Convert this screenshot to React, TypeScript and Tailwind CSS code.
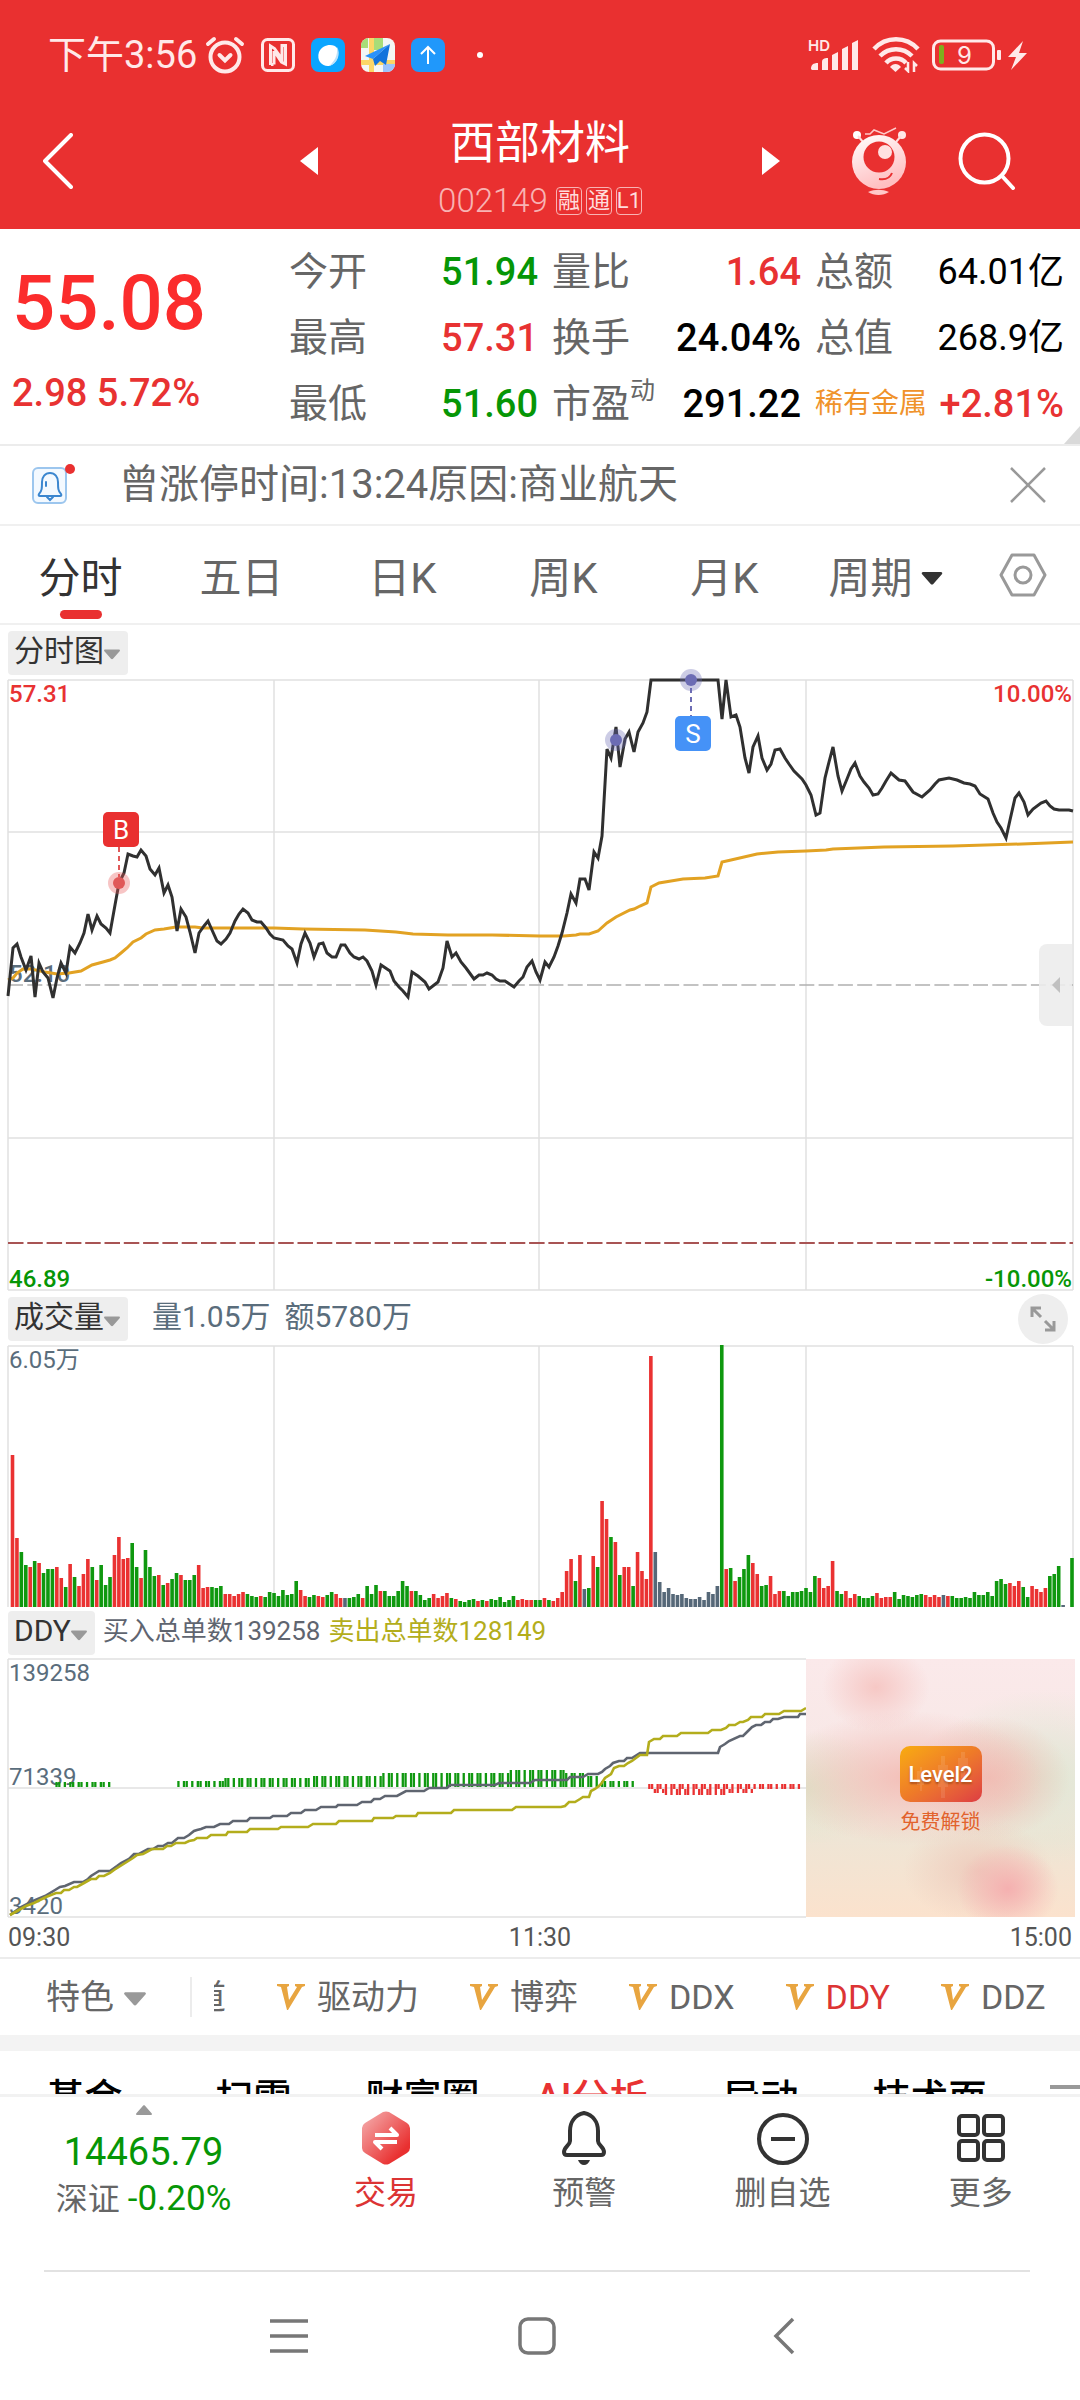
import type { ReactNode } from "react";

const PRICE =
  "8,316 13,268 17,264 21,277 26,290 31,276 35,317 39,283 43,292 48,298 53,318 57,298 61,283 66,293 70,267 75,273 80,263 84,253 88,234 92,250 97,236 101,244 106,248 110,253 115,225 119,203 124,193 128,174 133,176 137,177 141,170 146,176 150,189 155,195 159,188 164,213 168,205 172,217 177,251 181,229 186,237 190,252 195,273 199,253 204,246 208,241 212,250 217,261 221,264 226,259 230,253 235,241 239,234 243,229 248,233 252,240 257,242 261,242 266,248 270,254 274,258 283,260 288,266 292,269 297,283 301,264 305,253 310,263 314,277 319,264 323,263 327,273 332,277 336,277 341,265 345,265 350,273 354,277 359,279 363,277 367,281 372,291 376,305 381,285 390,291 394,301 399,307 403,311 408,317 412,292 418,296 425,302 429,309 438,302 443,288 447,261 452,277 456,273 461,282 466,288 474,299 479,295 483,295 487,293 492,295 496,299 500,301 505,301 514,307 519,301 523,297 527,287 532,281 536,292 540,300 545,282 549,287 554,277 558,266 562,253 567,233 571,214 576,223 580,199 585,199 589,210 594,172 598,178 602,156 607,69 611,78 616,47 620,87 625,59 629,52 634,72 638,52 643,43 647,32 651,0 718,0 722,39 726,0 731,37 736,35 740,47 745,78 749,93 753,67 758,56 762,78 767,90 771,84 775,70 780,69 785,78 789,84 794,91 802,99 806,105 811,115 816,135 820,133 825,98 829,82 833,67 838,96 842,111 847,99 851,89 855,83 860,96 864,102 869,108 873,115 878,114 882,108 886,101 891,93 899,100 905,101 913,112 922,117 930,110 935,104 939,100 949,98 957,100 964,103 970,104 975,106 980,114 988,119 993,133 997,142 1001,148 1006,158 1010,140 1015,118 1019,113 1024,122 1028,135 1033,129 1041,123 1046,121 1050,126 1054,129 1059,130 1069,130 1073,131";

const AVERAGE =
  "8,300 13,298 17,293 23,289 31,289 45,292 57,294 69,293 81,291 92,285 103,282 110,280 115,278 121,273 127,268 133,262 141,258 146,254 155,250 164,249 176,247 195,247 203,248 234,248 274,248 303,249 365,250 396,252 413,254 448,255 492,255 540,256 564,256 576,255 580,254 589,254 598,251 607,243 616,237 630,230 634,229 640,226 647,223 651,207 659,203 671,201 683,199 705,198 718,196 722,182 731,180 757,174 778,172 806,171 826,170 833,169 884,167 953,166 1022,164 1073,162";

const BUY_ORDERS =
  "10,256 21,248 33,242 45,237 55,231 60,228 65,227 74,223 83,223 88,220 91,217 99,212 110,212 117,207 121,204 129,200 134,195 139,195 148,190 153,190 158,187 163,187 168,184 172,184 178,179 184,179 189,176 194,172 197,171 201,170 206,168 214,168 220,165 229,165 233,162 247,162 250,159 270,159 273,157 287,157 291,154 301,154 305,151 316,151 321,148 336,148 338,146 357,146 362,143 371,143 374,140 380,140 385,137 397,137 406,132 424,132 429,129 447,129 450,126 495,126 499,124 530,124 535,121 567,121 570,118 583,118 588,115 598,115 602,113 605,110 610,107 613,104 619,102 624,102 627,99 632,99 640,94 718,94 720,88 725,85 729,82 740,77 743,77 748,72 752,68 756,66 761,66 765,63 770,63 773,60 778,60 784,58 798,58 800,55 806,55";

const SELL_ORDERS =
  "10,256 26,247 34,244 46,238 56,234 61,234 64,231 69,231 74,228 77,228 84,224 91,220 96,220 99,217 104,217 110,214 114,211 133,199 137,196 143,195 152,190 163,190 167,187 171,187 176,184 185,184 189,182 194,181 197,179 207,179 211,176 226,176 228,173 247,173 250,170 278,170 281,168 308,168 313,165 336,165 339,162 372,162 374,159 393,159 396,157 416,157 418,154 451,154 454,151 512,151 516,148 561,148 565,147 569,143 575,143 580,140 583,138 589,138 591,132 595,130 599,127 601,125 605,119 611,115 614,109 619,107 624,107 628,104 632,102 640,96 647,96 649,83 654,80 660,80 663,77 677,77 681,74 708,74 712,71 721,71 726,69 729,66 735,66 740,63 743,63 748,61 751,58 762,58 765,55 779,55 784,52 801,52 806,49";

// one bar per minute: r = up, g = down, s = flat
const VOLUME = (
  "r152 r69 g55 g42 r40 g46 r44 g34 g38 g38 r40 r29 g20 r43 g30 r21 r33 r48 g40 r27 g42 g22 g30 r52 r70 r48 r49 g64 g40 r29 g57 g40 g31 r32 g22 r24 g28 g34 r32 g27 g27 g32 r42 r19 r20 g20 g19 g21 r13 r13 r11 r13 r15 g13 g11 g10 r11 g10 g15 g14 " +
  "g11 g17 g12 g13 g26 r17 r11 g10 g12 r11 r10 g12 g15 r13 r9 s9 g9 g10 g13 r9 g21 g13 g22 r16 g16 g11 g11 g16 g26 g21 r16 g16 g12 g7 g9 r13 r9 r11 r14 g9 r8 g6 g5 g7 g8 r6 g7 r6 g8 g7 g10 g5 g7 g11 r7 r8 r7 r7 g7 g7 " +
  "r9 g7 r6 r9 r15 r36 r48 g26 r52 s18 g19 r51 g40 r106 r88 g70 r65 g32 r40 r40 g21 r55 r36 r28 r251 s55 s25 s15 s19 s13 s12 s13 s9 s8 s8 s10 s7 s15 s13 s21 g262 r38 g39 r26 g30 g38 g52 r44 r33 g21 g22 r31 r13 r16 g16 g11 g15 g15 g16 g19 " +
  "g15 g31 r29 r19 r21 r46 g16 g13 r16 r9 r13 g11 g9 g9 g11 r14 r9 r10 r10 g15 g8 g12 g11 g10 g12 g13 r12 r10 r12 r10 s12 r11 g11 g9 g9 g10 g9 g15 g12 g12 g15 g11 g26 g28 g23 r24 r21 r26 g20 g10 r21 r18 r15 r19 g31 g33 g41 s2 s0 g49"
).split(" ");

const BAR_COLORS: Record<string, string> = {
  r: "#ea3232",
  g: "#0f980f",
  s: "#566878",
};

// [first x, last x, top, height, color]
const DDY_BARS: [number, number, number, number, string][] = [
  [55, 111, 123, 5, "#0f980f"],
  [178, 223, 122, 6, "#0f980f"],
  [224, 310, 119, 9, "#0f980f"],
  [312, 382, 117, 11, "#0f980f"],
  [383, 508, 114, 14, "#0f980f"],
  [510, 564, 111, 17, "#0f980f"],
  [565, 584, 114, 14, "#0f980f"],
  [586, 599, 117, 11, "#0f980f"],
  [600, 635, 122, 6, "#0f980f"],
  [647, 800, 125, 5, "#ea3232"],
  [653, 665, 130, 4, "#ea3232"],
  [666, 727, 130, 6, "#ea3232"],
  [728, 753, 130, 4, "#ea3232"],
];

const QUOTES = [
  { label: "今开", value: "51.94", color: "text-[#069606]" },
  { label: "量比", value: "1.64", color: "text-[#e83232]" },
  { label: "总额", value: "64.01亿", color: "text-black" },
  { label: "最高", value: "57.31", color: "text-[#e83232]" },
  { label: "换手", value: "24.04%", color: "text-black" },
  { label: "总值", value: "268.9亿", color: "text-black" },
  { label: "最低", value: "51.60", color: "text-[#069606]" },
  { label: "市盈", sup: "动", value: "291.22", color: "text-black" },
  { label: "稀有金属", value: "+2.81%", color: "text-[#e83232]" },
];

const PERIODS = ["分时", "五日", "日K", "周K", "月K", "周期"];
const FEATURES = ["驱动力", "博弈", "DDX", "DDY", "DDZ"];
const SECTIONS = ["基金", "扫雷", "财富圈", "AI分析", "异动", "技术面"];

function Caret({ className }: { className: string }) {
  return (
    <svg viewBox="0 0 16 10" className={className} fill="currentColor" aria-hidden="true">
      <path d="M1.2 0h13.6c1 0 1.5 1 .8 1.8L9 9.200c-.5.6-1.500.6-2 0L.4 1.800C-.3 1 .2 0 1.200 0z" />
    </svg>
  );
}

function StatusBar() {
  return (
    <div className="flex h-[110px] items-center justify-between pl-12 pr-[52px] text-[#ffe9e9]">
      <div className="flex items-center gap-4">
        <div className="flex items-center gap-2">
          <span className="text-[38px] leading-10">下午3:56</span>
          <svg viewBox="0 0 40 40" className="size-10" fill="none" stroke="currentColor" strokeWidth="4" strokeLinecap="round">
            <circle cx="20" cy="22" r="14.500" />
            <path d="M14.500 20l5.500 5.500 5.500-5.500M3 9l6-5M37 9l-6-5" />
          </svg>
        </div>
        <svg viewBox="0 0 34 34" className="size-[34px]" fill="none" stroke="currentColor">
          <rect x="1.500" y="1.500" width="31" height="31" rx="5" strokeWidth="3" />
          <path d="M9.500 27V8l4 2.500L21 21V13M13 26.500V13M12.500 26.500H10M13.500 13.500L20.500 24l4 2V7.500H21V14" strokeWidth="3" />
        </svg>
        <svg viewBox="0 0 34 34" className="size-[34px]">
          <rect width="34" height="34" rx="8" fill="#0aa5ff" />
          <path d="M8 14c3-8 15-9 18-4 3 6 0 16-8 18-6 1-13-5-10-14z" fill="#fff" />
          <path d="M26 9c4 6 1 17-8 19 5-4 9-10 8-19z" fill="#b9e1fb" />
        </svg>
        <svg viewBox="0 0 34 34" className="size-[34px]">
          <clipPath id="map-clip">
            <rect width="34" height="34" rx="8" />
          </clipPath>
          <g clipPath="url(#map-clip)">
            <rect width="34" height="34" fill="#f4f6f4" />
            <path d="M0 0h7v10H0zM13 0h9v12h-9z" fill="#a8dd78" />
            <path d="M8 0h5v34H8zM0 22h34v5H0z" fill="#fcd667" />
            <path d="M22 26h12v8H22z" fill="#9cc3fb" />
            <path d="M29 6L4 18l8 3z" fill="#2a92fa" />
            <path d="M29 6L12 21l2 7 5-5 6 4z" fill="#1273dc" />
          </g>
        </svg>
        <svg viewBox="0 0 34 34" className="size-[34px]" fill="none" stroke="#fff" strokeWidth="2">
          <rect width="34" height="34" rx="8" fill="#2098fb" stroke="none" />
          <path d="M17 26V9M10 16l7-7 7 7" />
        </svg>
        <span className="ml-4 size-[6px] rounded-full bg-white" />
      </div>
      <div className="flex items-center gap-3">
        <svg viewBox="0 0 52 34" className="h-[34px] w-[52px] overflow-visible" fill="currentColor">
          <text x="0" y="13" fontSize="15" fontWeight="600" fontFamily="Inter, sans-serif">HD</text>
          <path d="M3 31c0-4 2-6 7-6v7H4zM14 24c0-3 2-4 6-4v12h-6zM24 17l6-3v18h-6zM34 11l6-3v24h-6zM44 5l6-3v30h-6z" />
        </svg>
        <svg viewBox="0 0 48 36" className="h-9 w-12" fill="none" stroke="currentColor" strokeWidth="4.500">
          <path d="M2 12C14-1 34-1 46 12M8 19c9-9 23-9 32 0M14 26c5-6 15-6 20 0" />
          <path d="M18 30c3-4 8-4 11 0l-5.500 5z" fill="currentColor" stroke="none" />
          <path d="M36 25v9l-3-3M42 35v-9l3 3" strokeWidth="2.500" />
        </svg>
        <svg viewBox="0 0 96 32" className="h-8 w-24" fill="none">
          <rect x="1.500" y="2" width="60" height="28" rx="7" stroke="currentColor" strokeWidth="3" />
          <rect x="7" y="6" width="5" height="19" rx="2" fill="#7fae1e" />
          <rect x="65" y="11" width="4" height="10" rx="1" fill="currentColor" />
          <path d="M91 2L76 18h8l-5 13 16-17h-8z" fill="currentColor" />
          <text x="25" y="25" fontSize="24" fontFamily="Inter, sans-serif" fill="currentColor">9</text>
        </svg>
      </div>
    </div>
  );
}

function TitleBar() {
  return (
    <div className="grid h-[119px] grid-cols-[270px_78px_1fr_78px_270px] items-start">
      <button type="button" aria-label="返回" className="flex h-[102px] items-center pl-[43px]">
        <svg viewBox="0 0 30 56" className="h-14 w-[30px]" fill="none" stroke="#fff" strokeWidth="4" strokeLinecap="round" strokeLinejoin="round">
          <path d="M28 2L2 28l26 26" />
        </svg>
      </button>
      <button type="button" aria-label="上一只" className="flex h-[102px] items-center justify-center">
        <svg viewBox="0 0 18 28" className="h-7 w-[18px]" fill="#fff">
          <path d="M18 0v28L0 14z" />
        </svg>
      </button>
      <div className="flex flex-col items-center pt-1 text-white">
        <h1 className="text-[45px] leading-[60px]">西部材料</h1>
        <div className="flex items-center gap-1 text-[#f8b3b3]">
          <span className="mr-1 text-[33px] font-light leading-[54px]">002149</span>
          {["融", "通", "L1"].map((tag) => (
            <span key={tag} className="flex h-7 w-[26px] items-center justify-center rounded-sm border border-[#f8b3b3] text-[22px] leading-6 text-[#ffdcdc]">
              {tag}
            </span>
          ))}
        </div>
      </div>
      <button type="button" aria-label="下一只" className="flex h-[102px] items-center justify-center">
        <svg viewBox="0 0 18 28" className="h-7 w-[18px]" fill="#fff">
          <path d="M0 0v28l18-14z" />
        </svg>
      </button>
      <div className="flex h-[102px] items-center gap-[50px] pl-10">
        <button type="button" aria-label="助手">
          <svg viewBox="0 0 58 70" className="h-[70px] w-[58px]">
            <defs>
              <linearGradient id="mascot" x1="0" y1="0" x2=".4" y2="1">
                <stop offset="0" stopColor="#fff" />
                <stop offset="1" stopColor="#ffbfc1" />
              </linearGradient>
            </defs>
            <circle cx="7" cy="9" r="4" fill="#fff" />
            <circle cx="52" cy="9" r="4" fill="#ffe8e8" />
            <path d="M8 10l5 6M51 10l-5 6" stroke="#ffdcdc" strokeWidth="2" />
            <path d="M15 8h5l4-4 10 4 12-6" stroke="#ffc9c9" strokeWidth="1.500" fill="none" />
            <circle cx="29" cy="36" r="27" fill="url(#mascot)" />
            <circle cx="29" cy="31" r="15.500" fill="#e93030" />
            <circle cx="35" cy="26" r="7" fill="#ffe0e0" />
            <path d="M29 53c6 1 11-1 13-6" stroke="#e93030" strokeWidth="2" fill="none" />
            <path d="M18 66c7-3 14-3 21 0-6 4-15 4-21 0z" fill="#ffc9c9" />
          </svg>
        </button>
        <button type="button" aria-label="搜索">
          <svg viewBox="0 0 58 58" className="size-[58px]" fill="none" stroke="#fff" strokeWidth="4" strokeLinecap="round">
            <circle cx="26.500" cy="26.500" r="24" />
            <path d="M44 44l11 12" />
          </svg>
        </button>
      </div>
    </div>
  );
}

function QuotePanel() {
  return (
    <section className="relative flex items-start border-b-2 border-[#ececec] pb-[7px] pt-[10px]">
      <div className="w-[289px] shrink-0 pl-3 font-medium text-[#e83232]">
        <div className="pt-[15px] text-[76px] leading-[98px] text-[#fb2c2c]">55.08</div>
        <div className="pt-4 text-[38px] leading-[50px]">2.98 5.72%</div>
      </div>
      <dl className="grid flex-1 grid-cols-3 gap-x-[14px] pr-4">
        {QUOTES.map(({ label, sup, value, color }) => (
          <div key={label} className="flex h-[66px] items-center justify-between whitespace-nowrap">
            <dt className={label === "稀有金属" ? "text-[28px] text-[#f0932b]" : "flex text-[39px] text-[#666]"}>
              {label}
              {sup && <sup className="top-0 -mt-1 text-[25px] leading-10">{sup}</sup>}
            </dt>
            <dd className={`${value.endsWith("亿") ? "text-[36px]" : "text-[38px] font-medium"} ${color}`}>{value}</dd>
          </div>
        ))}
      </dl>
      <svg viewBox="0 0 16 18" className="absolute bottom-0 right-0 h-[18px] w-4">
        <path d="M16 0v18H0z" fill="#d9d9d9" />
      </svg>
    </section>
  );
}

function NoticeBar() {
  return (
    <div className="flex h-[80px] items-center border-b-2 border-[#f0f0f0] pl-8 pr-[34px]">
      <svg viewBox="0 0 44 44" className="mr-[43px] h-11 w-11 shrink-0" fill="none">
        <rect x="1" y="5" width="33" height="35" rx="5" fill="#f3f9ff" stroke="#9cc6ee" strokeWidth="2" />
        <path d="M7 31c3-3 3-6 3-12 0-5 3-9 8-9s8 4 8 9c0 6 0 9 3 12q1 2-1 2H8q-2 0-1-2zM15 34l3 3 3-3M14 19v4" stroke="#3b86cf" strokeWidth="2" strokeLinecap="round" />
        <circle cx="38" cy="6" r="5" fill="#e93030" />
      </svg>
      <p className="flex-1 text-[40px] leading-[50px] text-[#666]">曾涨停时间:13:24原因:商业航天</p>
      <button type="button" aria-label="关闭">
        <svg viewBox="0 0 36 36" className="size-9" stroke="#999" strokeWidth="2.500">
          <path d="M1 1l34 34M35 1L1 35" />
        </svg>
      </button>
    </div>
  );
}

function PeriodTabs() {
  return (
    <nav className="grid h-[99px] grid-cols-[repeat(6,161fr)_114fr] border-b-2 border-[#f0f0f0]">
      {PERIODS.map((name, i) => (
        <button
          key={name}
          type="button"
          className={`relative flex items-center justify-center gap-2 pt-2 text-[42px] leading-[50px] ${i === 0 ? "text-[#333]" : "text-[#666]"}`}
        >
          {name}
          {name === "周期" && <Caret className="h-[13px] w-[22px] text-[#333]" />}
          {i === 0 && <span className="absolute bottom-1 left-1/2 h-[9px] w-[42px] -translate-x-1/2 rounded-full bg-[#e93030]" />}
        </button>
      ))}
      <button type="button" aria-label="设置" className="flex items-center justify-center">
        <svg viewBox="0 0 48 46" className="h-[46px] w-12" fill="none" stroke="#999" strokeWidth="3" strokeLinejoin="round">
          <path d="M13 3h22l11 20-11 20H13L2 23z" />
          <circle cx="24" cy="23" r="8" />
        </svg>
      </button>
    </nav>
  );
}

function Picker({ children }: { children: ReactNode }) {
  return (
    <button type="button" className="flex h-11 items-center rounded bg-[#eee] pl-[6px] pr-2 text-[30px] leading-10 text-[#333]">
      <span className="pb-1">{children}</span>
      <Caret className="mt-1 h-[11px] w-4 text-[#999]" />
    </button>
  );
}

function PriceChart() {
  return (
    <div className="relative">
      <svg viewBox="0 0 1080 612" className="block w-full overflow-visible" fontSize="24" fontWeight="500" fill="none">
        <path d="M8 0H1073M8 152H1073M8 458H1073M8 610H1073M8 0V610M274 0V610M539 0V610M806 0V610M1073 0V610" stroke="#e1e1e1" strokeWidth="1.500" />
        <path d="M8 305H1073" stroke="#b0b0b0" strokeWidth="1.500" strokeDasharray="15 4.300" />
        <path d="M8 563H1073" stroke="#a85454" strokeWidth="2" strokeDasharray="15.500 3.800" />
        <text x="9" y="302" fill="#5a6d7c">52.10</text>
        <polyline points={AVERAGE} stroke="#e2a223" strokeWidth="3" />
        <polyline points={PRICE} stroke="#303030" strokeWidth="3" strokeLinejoin="miter" />
        <text x="9" y="22" fill="#e83232">57.31</text>
        <text x="1072" y="22" fill="#e83232" textAnchor="end">10.00%</text>
        <text x="9" y="607" fill="#069606">46.89</text>
        <text x="1072" y="607" fill="#069606" textAnchor="end">-10.00%</text>

        <path d="M119 167v30" stroke="#e05858" strokeWidth="2" strokeDasharray="5 4" />
        <circle cx="119" cy="203" r="11" fill="#e85a5a" fillOpacity=".35" />
        <circle cx="119" cy="203" r="6" fill="#e05858" />
        <rect x="103" y="132" width="36" height="35" rx="5" fill="#e93030" />
        <text x="121" y="159" fontSize="26" fontWeight="400" fill="#fff" textAnchor="middle">B</text>

        <circle cx="616" cy="60" r="11" fill="#6c6cb4" fillOpacity=".35" />
        <circle cx="616" cy="60" r="6" fill="#6c6cb4" />
        <path d="M691 8v28" stroke="#6c6cb4" strokeWidth="2" strokeDasharray="5 4" />
        <circle cx="691" cy="0" r="11" fill="#6c6cb4" fillOpacity=".35" />
        <circle cx="691" cy="0" r="6" fill="#6c6cb4" />
        <rect x="675" y="36" width="36" height="35" rx="5" fill="#4592f7" />
        <text x="693" y="63" fontSize="26" fontWeight="400" fill="#fff" textAnchor="middle">S</text>
      </svg>
      <button type="button" aria-label="展开盘口" className="absolute right-2 top-[264px] flex h-[82px] w-[33px] items-center justify-center rounded-l-lg bg-[#ececec]/90">
        <svg viewBox="0 0 8 16" className="h-4 w-2" fill="#c0c0c0">
          <path d="M8 0v16L0 8z" />
        </svg>
      </button>
    </div>
  );
}

function VolumeChart() {
  return (
    <svg viewBox="0 0 1080 261" className="block w-full overflow-visible" fontSize="24">
      <path d="M8 0H1073M8 0V261M274 0V261M539 0V261M806 0V261M1073 0V261" stroke="#e1e1e1" strokeWidth="1.500" />
      <text x="9" y="22" fill="#5a6d7c">6.05万</text>
      {VOLUME.map((bar, i) => {
        const height = Number(bar.slice(1));
        return <rect key={i} x={10.700 + i * 4.433} y={261 - height} width="3.600" height={height} fill={BAR_COLORS[bar[0]]} />;
      })}
    </svg>
  );
}

function DdyChart() {
  return (
    <div className="flex">
      <svg viewBox="0 0 806 260" className="block w-[74.63%] shrink-0 overflow-visible" fontSize="24" fill="none">
        <path d="M8 0H806M8 129H806M8 258H806M8 0V258" stroke="#e1e1e1" strokeWidth="1.500" />
        <text x="9" y="22" fill="#5a6d7c">139258</text>
        <text x="9" y="126" fill="#5a6d7c">71339</text>
        <text x="9" y="255" fill="#5a6d7c">3420</text>
        {DDY_BARS.map(([from, to, y, height, color]) =>
          Array.from({ length: Math.floor((to - from) / 4.433) + 1 }, (_, i) => (
            <rect key={`${from}-${y}-${i}`} x={Math.round((from + i * 4.433) / 2.770) * 2.770} y={y} width="2.300" height={height} fill={color} />
          ))
        )}
        <polyline points={BUY_ORDERS} stroke="#5f6570" strokeWidth="2.600" />
        <polyline points={SELL_ORDERS} stroke="#b3ad1c" strokeWidth="2.600" />
      </svg>
      <div className="flex-1 pb-0.5 pr-[5px]">
        <button
          type="button"
          className="flex h-full w-full flex-col items-center justify-center gap-1 bg-[radial-gradient(ellipse_20%_17%_at_26%_11%,#f6c8c5,transparent),radial-gradient(ellipse_19%_17%_at_75%_89%,#f5b0b0,transparent),radial-gradient(ellipse_28%_20%_at_64%_82%,#eeccbd,transparent),radial-gradient(ellipse_50%_26%_at_38%_46%,#f3bfb8,transparent),radial-gradient(ellipse_30%_24%_at_68%_46%,#f0bcb2,transparent),radial-gradient(ellipse_44%_34%_at_88%_46%,#e0e7d4,transparent),radial-gradient(ellipse_34%_22%_at_0%_50%,#dde4c9,transparent),linear-gradient(#fbe9ea,#f7e8e6_40%,#efe5d5_70%,#fbe2cd)] pt-2"
        >
          <span className="relative flex h-14 w-[82px] items-center justify-center rounded-[10px] bg-linear-to-br from-[#f8ac0b] via-[#ee7a28] to-[#dd3b42] text-[22px] font-medium text-white [text-shadow:0_2px_2px_#b0501c]">
            <svg viewBox="0 0 82 56" className="absolute inset-0" fill="#fff" fillOpacity=".1">
              <path d="M17 25h7v14h-7zM20 21h2v24h-2zM38 19h10v22H38zM41 10h4v42h-4zM58 12h10v12H58zM61 6h4v26h-4z" />
            </svg>
            Level2
          </span>
          <span className="text-[20px] leading-8 text-[#e2622c]">免费解锁</span>
        </button>
      </div>
    </div>
  );
}

function FeatureRow() {
  return (
    <div className="flex h-[78px] items-center overflow-hidden border-t-2 border-[#ececec] pl-[46px] text-[34px] text-[#666]">
      <button type="button" className="flex shrink-0 items-center gap-[10px]">
        特色
        <Caret className="mt-1 h-[14px] w-[22px] text-[#999]" />
      </button>
      <span className="ml-11 h-10 w-0.5 shrink-0 bg-[#ececec]" />
      <div className="ml-[22px] flex shrink-0 items-center gap-[51px] whitespace-nowrap">
        <span className="flex w-3 justify-end overflow-hidden">道</span>
        {FEATURES.map((name) => (
          <button key={name} type="button" className={`flex items-center gap-3 ${name === "DDY" ? "text-[#dc3434]" : ""}`}>
            <svg viewBox="0 0 28 26" className="h-[26px] w-7" fill="#e8a540">
              <path d="M0 0h12v2l-2 1 2 13L20 3l-2-1V0h10v2l-3 1-14 23h-1L4 3 0 2z" />
            </svg>
            {name}
          </button>
        ))}
      </div>
    </div>
  );
}

function ToolButton({ label, icon, className = "text-[#666]" }: { label: string; icon: ReactNode; className?: string }) {
  return (
    <button type="button" className={`flex flex-1 flex-col items-center gap-1 pt-[14px] text-[32px] leading-[48px] ${className}`}>
      <svg viewBox="0 0 54 54" className="size-[54px]" fill="none" stroke="#333" strokeWidth="4" strokeLinejoin="round">
        {icon}
      </svg>
      {label}
    </button>
  );
}

function BottomBar() {
  return (
    <footer className="shrink-0 border-t-[3px] border-[#f2f2f2] bg-white">
      <div className="flex h-[173px]">
        <button type="button" className="flex w-[287px] flex-col items-center whitespace-nowrap pt-2 text-[#069606]">
          <Caret className="h-[10px] w-5 rotate-180 text-[#999]" />
          <span className="pt-[14px] text-[38px] leading-[46px]">14465.79</span>
          <span className="flex gap-2 text-[35px] leading-[48px]">
            <span className="text-[32px] text-[#666]">深证</span>
            -0.20%
          </span>
        </button>
        <ToolButton
          label="交易"
          className="text-[#dc3434]"
          icon={
            <>
              <defs>
                <linearGradient id="trade" x1="0" y1="0" x2="1" y2="1">
                  <stop offset="0" stopColor="#f5b3b3" />
                  <stop offset=".8" stopColor="#e93030" />
                </linearGradient>
              </defs>
              <path d="M24 1q3-1 6 0l18 11q3 2 3 5v20q0 3-3 5L30 53q-3 1-6 0L6 42q-3-2-3-5V17q0-3 3-5z" fill="url(#trade)" stroke="none" />
              <path d="M16 24h22l-7-7M38 31H16l7 7" stroke="#fff" />
            </>
          }
        />
        <ToolButton
          label="预警"
          icon={
            <>
              <path d="M27 2c-9 2-14 9-14 18v10c0 4-6 6-6 11 0 2 1 3 3 3h34c2 0 3-1 3-3 0-5-6-7-6-11V20c0-9-5-16-14-18z" />
              <path d="M21 49h12q-2 5-6 5t-6-5z" fill="#333" stroke="none" />
            </>
          }
        />
        <ToolButton
          label="删自选"
          icon={
            <>
              <circle cx="27" cy="28" r="24" />
              <path d="M15 28h24" />
            </>
          }
        />
        <ToolButton
          label="更多"
          icon={
            <>
              <rect x="5" y="5" width="19" height="19" rx="3" />
              <rect x="30" y="5" width="19" height="19" rx="3" />
              <rect x="5" y="30" width="19" height="19" rx="3" />
              <rect x="30" y="30" width="19" height="19" rx="3" />
            </>
          }
        />
      </div>
      <div className="ml-11 mr-[50px] flex h-[130px] items-center justify-center gap-[210px] border-t-2 border-[#e2e2e2] text-[#777]">
        <button type="button" aria-label="最近任务">
          <svg viewBox="0 0 38 38" className="size-[38px]" stroke="currentColor" strokeWidth="3.500">
            <path d="M0 4h38M0 19h38M0 34h38" />
          </svg>
        </button>
        <button type="button" aria-label="主屏幕">
          <svg viewBox="0 0 38 38" className="size-[38px]" fill="none" stroke="currentColor" strokeWidth="3.500">
            <rect x="2" y="2" width="34" height="34" rx="8" />
          </svg>
        </button>
        <button type="button" aria-label="返回">
          <svg viewBox="0 0 38 38" className="size-[38px]" fill="none" stroke="currentColor" strokeWidth="3.500">
            <path d="M27 2L10 19l17 17" />
          </svg>
        </button>
      </div>
    </footer>
  );
}

export default function App() {
  return (
    <div className="flex h-screen flex-col bg-white font-[Roboto,'Noto_Sans_CJK_SC',sans-serif]">
      <header className="shrink-0 bg-[#e93030]">
        <StatusBar />
        <TitleBar />
      </header>
      <main className="min-h-0 flex-1 overflow-y-auto [scrollbar-width:none]">
        <QuotePanel />
        <NoticeBar />
        <PeriodTabs />
        <div className="flex h-[55px] items-center pl-2">
          <Picker>分时图</Picker>
        </div>
        <PriceChart />
        <div className="flex h-[54px] items-center pl-2 pr-3 text-[30px] leading-10 text-[#5a6d7c]">
          <Picker>成交量</Picker>
          <span className="ml-6 pb-1">量1.05万</span>
          <span className="ml-[14px] flex-1 pb-1">额5780万</span>
          <button type="button" aria-label="全屏" className="flex size-[50px] items-center justify-center rounded-full bg-[#eee]">
            <svg viewBox="0 0 26 26" className="size-[26px]" fill="none" stroke="#999" strokeWidth="3">
              <path d="M2 11V2h9M2 2l9 9M24 15v9h-9M24 24l-9-9" />
            </svg>
          </button>
        </div>
        <VolumeChart />
        <div className="flex h-[52px] items-center gap-2 pl-2 text-[26px] leading-10">
          <Picker>DDY</Picker>
          <span className="pb-1 text-[#5f6570]">买入总单数139258</span>
          <span className="pb-1 text-[#b3ad1c]">卖出总单数128149</span>
        </div>
        <DdyChart />
        <div className="grid h-[38px] grid-cols-3 items-center px-2 text-[25px] text-[#555]">
          <span>09:30</span>
          <span className="text-center">11:30</span>
          <span className="text-right">15:00</span>
        </div>
        <FeatureRow />
        <nav className="grid grid-cols-[repeat(6,169fr)_66fr] items-center border-t-[16px] border-[#f3f3f3] pb-8 pt-[22px] text-[38px] font-medium leading-[50px] text-black">
          {SECTIONS.map((name) => (
            <button key={name} type="button" className={name === "AI分析" ? "text-[#e83232]" : ""}>
              {name}
            </button>
          ))}
          <button type="button" aria-label="全部栏目" className="flex justify-end">
            <svg viewBox="0 0 30 26" className="h-[26px] w-[30px]" stroke="#999" strokeWidth="4">
              <path d="M0 2h30M0 13h30M0 24h30" />
            </svg>
          </button>
        </nav>
      </main>
      <BottomBar />
    </div>
  );
}
